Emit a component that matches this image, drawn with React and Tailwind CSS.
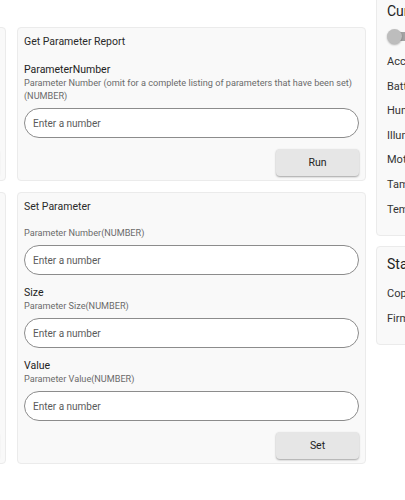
import { useState } from "react"

function Field({ label, hint, first }) {
  return (
    <div className={first ? "mt-[13px]" : "mt-[10px]"}>
      {label && <div className="text-[10.5px] leading-[15px] text-[#222]">{label}</div>}
      <div className="text-[9.15px] leading-[13px] text-[#6b6b6b]">{hint}</div>
      <input
        type="text"
        placeholder="Enter a number"
        className="mt-[5px] block h-[30px] w-full rounded-full border border-[#8c8c8c] bg-white px-[8px] text-[10px] text-[#333] outline-none placeholder:text-[#5a5a5a]"
      />
    </div>
  )
}

function CommandCard({ title, fields, action }) {
  return (
    <div className="rounded-[4px] border border-[#ebebeb] bg-[#f9f9f9] px-[6px] pt-[7px] pb-[4px]">
      <div className="text-[10.5px] leading-[14px] text-[#2a2a2a]">{title}</div>
      {fields.map((f, i) => (
        <Field key={i} label={f.label} hint={f.hint} first={i === 0} />
      ))}
      <div className="mt-[11px] flex justify-end">
        <button className="h-[27px] w-[83px] rounded-[4px] bg-[#e6e6e6] text-[10.5px] text-[#222] shadow-[0_1px_2px_rgba(0,0,0,0.35)]">
          {action}
        </button>
      </div>
    </div>
  )
}

function Toggle() {
  const [on] = useState(false)
  return (
    <div className="relative mt-[9px] h-[15px] w-[28px]">
      <div className="absolute top-[3px] left-[2px] h-[9px] w-[24px] rounded-full bg-[#a3a3a3]" />
      <div className={"absolute top-0 h-[15px] w-[15px] rounded-full bg-[#bdbdbd] shadow-[0_1px_2px_rgba(0,0,0,0.3)] " + (on ? "right-0" : "left-0")} />
    </div>
  )
}

function InfoCard({ title, items, toggle }) {
  return (
    <div className="rounded-[4px] border border-[#ebebeb] bg-[#f9f9f9] px-[10px] pt-[8px] pb-[13px]">
      <div className="whitespace-nowrap text-[14px] leading-[18px] text-[#222]">{title}</div>
      {toggle && <Toggle />}
      <div className={toggle ? "mt-[6px]" : "mt-[9px]"}>
        {items.map(item => (
          <div key={item} className="h-[24.6px] whitespace-nowrap text-[11px] leading-[24.6px] text-[#333]">
            {item}
          </div>
        ))}
      </div>
    </div>
  )
}

const reportFields = [
  {
    label: "ParameterNumber",
    hint: "Parameter Number (omit for a complete listing of parameters that have been set) (NUMBER)",
  },
]

const setFields = [
  { hint: "Parameter Number(NUMBER)" },
  { label: "Size", hint: "Parameter Size(NUMBER)" },
  { label: "Value", hint: "Parameter Value(NUMBER)" },
]

export default function App() {
  return (
    <div className="h-[500px] w-[405px] overflow-hidden bg-white font-['Roboto','Liberation_Sans',sans-serif]">
      <div className="-ml-[343px] flex items-start">
        <div className="mt-[27px] flex w-[349px] shrink-0 flex-col gap-[11px]">
          <CommandCard title="Get Association Report" fields={reportFields} action="Run" />
          <CommandCard title="Set Association" fields={setFields} action="Set" />
        </div>
        <div className="mt-[27px] ml-[11px] flex w-[349px] shrink-0 flex-col gap-[11px]">
          <CommandCard title="Get Parameter Report" fields={reportFields} action="Run" />
          <CommandCard title="Set Parameter" fields={setFields} action="Set" />
        </div>
        <div className="-mt-[7px] ml-[10px] flex w-[240px] shrink-0 flex-col gap-[10px]">
          <InfoCard
            title="Current States"
            toggle
            items={["Acceleration", "Battery", "Humidity", "Illuminance", "Motion", "Tamper", "Temperature"]}
          />
          <InfoCard title="State Variables" items={["Copyright", "Firmware"]} />
        </div>
      </div>
    </div>
  )
}
